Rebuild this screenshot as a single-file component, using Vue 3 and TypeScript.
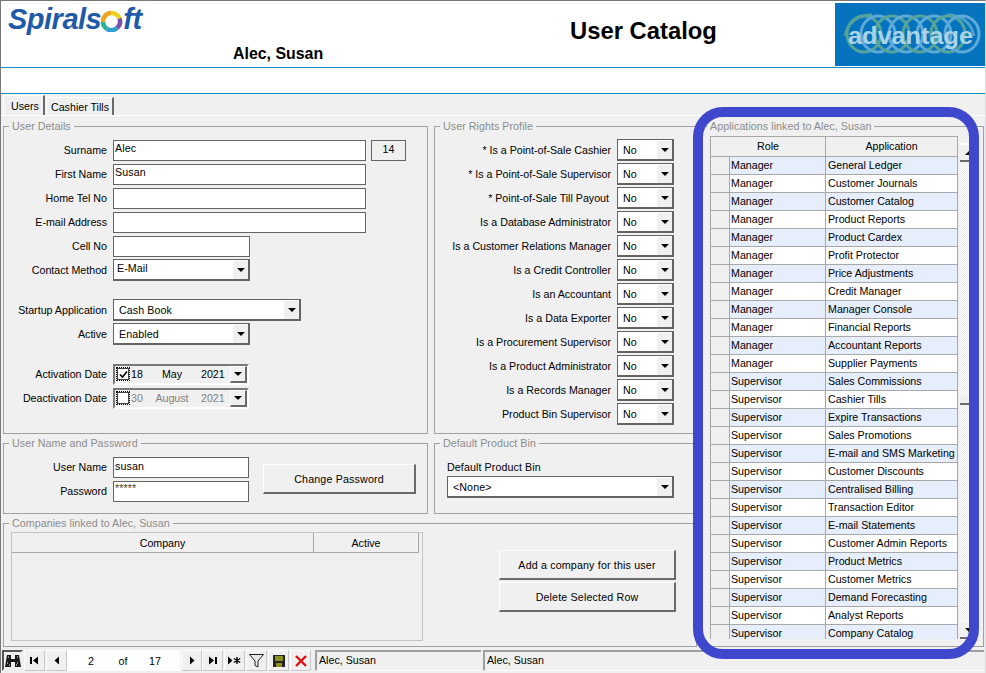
<script setup lang="ts">
interface LinkRow { role: string; app: string }
const manager: string[] = ['General Ledger','Customer Journals','Customer Catalog','Product Reports','Product Cardex','Profit Protector','Price Adjustments','Credit Manager','Manager Console','Financial Reports','Accountant Reports','Supplier Payments']
const supervisor: string[] = ['Sales Commissions','Cashier Tills','Expire Transactions','Sales Promotions','E-mail and SMS Marketing','Customer Discounts','Centralised Billing','Transaction Editor','E-mail Statements','Customer Admin Reports','Product Metrics','Customer Metrics','Demand Forecasting','Analyst Reports','Company Catalog']
const rows: LinkRow[] = [
  ...manager.map(app => ({ role: 'Manager', app })),
  ...supervisor.map(app => ({ role: 'Supervisor', app })),
]
const rights: string[] = ['* Is a Point-of-Sale Cashier','* Is a Point-of-Sale Supervisor','* Point-of-Sale Till Payout','Is a Database Administrator','Is a Customer Relations Manager','Is a Credit Controller','Is an Accountant','Is a Data Exporter','Is a Procurement Supervisor','Is a Product Administrator','Is a Records Manager','Product Bin Supervisor']
const loops: number[] = [864, 878, 892, 906, 920, 934, 948, 962]
</script>

<template>
  <div class="app">
    <header class="head">
      <div class="brand">
        <span class="brand-text">Spirals</span>
        <svg class="brand-ring" width="23" height="22" viewBox="0 0 23 22">
          <path d="M3 12 A8.5 8.5 0 0 1 11 3" fill="none" stroke="#f0a51e" stroke-width="4.5"/>
          <path d="M11 3 A8.5 8.5 0 0 1 19.5 8.5" fill="none" stroke="#e9d21f" stroke-width="4.5"/>
          <path d="M19.5 8.5 A8.5 8.5 0 0 1 17 18" fill="none" stroke="#7b4fa8" stroke-width="4.5"/>
          <path d="M17 18 A8.5 8.5 0 0 1 7 19" fill="none" stroke="#2f9fd0" stroke-width="4.5"/>
          <path d="M7 19 A8.5 8.5 0 0 1 3 12" fill="none" stroke="#2bb39a" stroke-width="4.5"/>
        </svg>
        <span class="brand-text">ft</span>
      </div>
      <div class="user-name">Alec, Susan</div>
      <h1 class="title">User Catalog</h1>
      <svg class="adv" width="150" height="63" viewBox="835 3 150 63">
        <rect x="835" y="3" width="150" height="63" fill="#0573bd"/>
        <g fill="none" stroke-width="3" opacity="0.85">
          <path d="M845 36 C848 22 858 15 872 15" stroke="#5fa98f"/>
          <path d="M974 36 C971 22 961 15 947 15" stroke="#5fa9cf"/>
          <ellipse v-for="(x, i) in loops" :key="x" :cx="x" cy="34" rx="17" ry="18" :stroke="i % 2 ? '#6db4dc' : '#63ad95'"/>
        </g>
        <text x="848" y="44" class="adv-text" textLength="125" lengthAdjust="spacingAndGlyphs">advantage</text>
      </svg>
    </header>
    <div class="band"></div>
    <nav class="tabs">
      <span class="tab tab-on">Users</span>
      <span class="tab">Cashier Tills</span>
    </nav>

    <main class="form">
      <div class="left">
        <div class="row-top">
          <section class="group details">
            <span class="legend">User Details</span>
            <div class="field"><label>Surname</label><span class="input w253">Alec</span><span class="input idbox">14</span></div>
            <div class="field"><label>First Name</label><span class="input w253">Susan</span></div>
            <div class="field"><label>Home Tel No</label><span class="input w253"></span></div>
            <div class="field"><label>E-mail Address</label><span class="input w253"></span></div>
            <div class="field"><label>Cell No</label><span class="input w137"></span></div>
            <div class="field"><label>Contact Method</label>
              <span class="combo w137 top"><span class="val">E-Mail</span><span class="drop"><i></i></span></span></div>
            <div class="field spaced"><label>Startup Application</label>
              <span class="combo w188"><span class="val pad">Cash Book</span><span class="drop"><i></i></span></span></div>
            <div class="field"><label>Active</label>
              <span class="combo w137"><span class="val pad">Enabled</span><span class="drop"><i></i></span></span></div>
            <div class="field spaced"><label>Activation Date</label>
              <span class="date"><span class="check"><svg width="9" height="9" viewBox="0 0 9 9"><path d="M1 4.5 L3.5 7 L8 1.5" fill="none" stroke="#000" stroke-width="1.6"/></svg></span><span class="d1">18</span><span class="d2">May</span><span class="d3">2021</span><span class="drop"><i></i></span></span></div>
            <div class="field"><label>Deactivation Date</label>
              <span class="date off"><span class="check"></span><span class="d1">30</span><span class="d2">August</span><span class="d3">2021</span><span class="drop"><i></i></span></span></div>
          </section>
          <section class="group rights">
            <span class="legend">User Rights Profile</span>
            <div v-for="(r, i) in rights" :key="r" class="field">
              <label class="rlabel" :class="{ nudge: i === 2 }">{{ r }}</label>
              <span class="combo w57"><span class="val pad">No</span><span class="drop"><i></i></span></span>
            </div>
          </section>
        </div>

        <div class="row-mid">
          <section class="group login">
            <span class="legend">User Name and Password</span>
            <div class="login-fields">
              <div class="field"><label>User Name</label><span class="input w136">susan</span></div>
              <div class="field"><label>Password</label><span class="input w136 pw">*****</span></div>
            </div>
            <button class="btn pwbtn">Change Password</button>
          </section>
          <section class="group bin">
            <span class="legend">Default Product Bin</span>
            <div class="bin-label">Default Product Bin</div>
            <span class="combo w227"><span class="val pad">&lt;None&gt;</span><span class="drop"><i></i></span></span>
          </section>
        </div>

        <section class="group companies">
          <span class="legend">Companies linked to Alec, Susan</span>
          <div class="ctable">
            <div class="chead"><span class="c1">Company</span><span class="c2">Active</span></div>
          </div>
          <div class="cbtns">
            <button class="btn">Add a company for this user</button>
            <button class="btn">Delete Selected Row</button>
          </div>
        </section>
      </div>

      <section class="group apps">
        <span class="legend">Applications linked to Alec, Susan</span>
        <div class="apps-wrap">
          <div class="atable">
            <div class="ahead"><span class="role">Role</span><span class="appc">Application</span></div>
            <div v-for="(r, i) in rows" :key="r.app" class="arow" :class="{ tint: i % 2 === 0 }">
              <span class="sel"></span><span class="role">{{ r.role }}</span><span class="appc">{{ r.app }}</span>
            </div>
          </div>
          <div class="scroll">
            <span class="sb-blank"></span>
            <span class="sb-btn"><i class="up"></i></span>
            <span class="sb-track"><span class="sb-thumb"></span></span>
            <span class="sb-btn"><i></i></span>
          </div>
        </div>
      </section>
    </main>

    <footer class="nav">
      <button class="nb find">
        <svg width="16" height="14" viewBox="0 0 16 14"><path d="M2 1h4v4h4V1h4l2 12h-6V8H6v5H0z" fill="#1a1a1a"/><path d="M3 3h1M12 3h1M2 9h2M12 9h2M4 11h1M11 11h1" stroke="#fff" stroke-width="1" stroke-dasharray="1 1"/></svg>
      </button>
      <button class="nb"><svg width="9" height="9" viewBox="0 0 9 9"><path d="M0 1h2v7H0zM8 0.5v8L3 4.5z" fill="#000"/></svg></button>
      <button class="nb"><svg width="6" height="9" viewBox="0 0 6 9"><path d="M5 0.5v8L0.5 4.5z" fill="#000"/></svg></button>
      <div class="rec"><span>2</span><span>of</span><span>17</span></div>
      <button class="nb"><svg width="6" height="9" viewBox="0 0 6 9"><path d="M1 0.5v8L5.5 4.5z" fill="#000"/></svg></button>
      <button class="nb tight"><svg width="9" height="9" viewBox="0 0 9 9"><path d="M1 0.5v8L6 4.5zM7 1h2v7H7z" fill="#000"/></svg></button>
      <button class="nb"><svg width="13" height="9" viewBox="0 0 13 9"><path d="M0 0.5v8L4.5 4.5z" fill="#000"/><path d="M9 1v7M5.8 2.5l6.4 4M12.2 2.5l-6.4 4" stroke="#000" stroke-width="1.4"/></svg></button>
      <button class="nb"><svg width="15" height="14" viewBox="0 0 15 14"><path d="M0.5 0.5h14L9 7v6L6 11.5V7z" fill="#e8e8e8" stroke="#222"/></svg></button>
      <button class="nb"><svg width="12" height="12" viewBox="0 0 12 12"><rect width="12" height="12" fill="#222"/><rect x="2" y="1" width="8" height="5" fill="#8f8f1f"/><rect x="3" y="8" width="6" height="4" fill="#8f8f1f"/></svg></button>
      <button class="nb"><svg width="12" height="12" viewBox="0 0 12 12"><path d="M1 1l10 10M11 1L1 11" stroke="#e01010" stroke-width="2.4"/></svg></button>
      <div class="status s1">Alec, Susan</div>
      <div class="status s2">Alec, Susan</div>
    </footer>

    <div class="ring"></div>
  </div>
</template>

<style>
html, body { margin: 0; padding: 0; background: #f0f0f0; }
</style>

<style scoped>
.app {
  position: relative; width: 986px; height: 673px; box-sizing: border-box; overflow: hidden;
  background: #f0f0f0; border-top: 1px solid #777; border-left: 1px solid #777; border-right: 1px solid #ddd;
  font: 10.67px "Liberation Sans", Arial, sans-serif; color: #000;
}
.head { height: 66px; background: #fff; border-bottom: 1px solid #1e8ccb; display: flex; box-sizing: content-box; }
.brand { width: 225px; margin-left: 7px; margin-top: 1px; height: 34px; display: flex; align-items: center; flex: none; }
.brand-text { font: italic bold 29px "Liberation Sans", sans-serif; color: #1f5aa8; letter-spacing: -0.5px; line-height: 34px; }
.brand-ring { margin: 3px 0 0 -1px; flex: none; }
.user-name { align-self: flex-end; font: bold 15.9px "Liberation Sans", sans-serif; margin-bottom: 4px; flex: none; }
.title { margin: 15px 0 0 247px; font: bold 23.8px/30px "Liberation Sans", sans-serif; flex: none; }
.adv { margin: 2px 0 0 auto; flex: none; }
.adv-text { font: bold 24px "Liberation Sans", sans-serif; fill: #abd3e6; }
.band { height: 25px; background: #fff; border-bottom: 1px solid #1e8ccb; }
.tabs { height: 21px; display: flex; align-items: flex-end; padding-left: 2px; border-bottom: 1px solid #fff; }
.tab { height: 18px; line-height: 18px; padding: 0 3px 0 4px; margin-left: 1px; background: #f0f0f0; border-top: 1px solid #fff; border-left: 1px solid #fff; border-right: 2px solid #6a6a6a; box-sizing: border-box; }
.tab-on { height: 20px; line-height: 20px; width: 42px; padding: 0 0 0 7px; margin-left: 0; }

.form { display: flex; padding: 10px 0 0 2px; gap: 4px; }
.left { width: 694px; flex: none; display: flex; flex-direction: column; gap: 9px; }
.row-top, .row-mid { display: flex; gap: 6px; }
.group { position: relative; box-sizing: border-box; border: 1px solid #a0a0a0; }
.legend { position: absolute; top: -7px; left: 5px; padding: 0 3px; background: #f0f0f0; color: #8c8c8c; line-height: 13px; white-space: nowrap; letter-spacing: 0.06px; }
.details { width: 425px; height: 308px; padding-top: 12px; display: flex; flex-direction: column; gap: 2px; flex: none; }
.rights { flex: 1; height: 308px; padding-top: 12px; display: flex; flex-direction: column; gap: 2px; }
.field { height: 22px; display: flex; align-items: center; flex: none; }
.field.spaced { margin-top: 16px; }
.field label { width: 103px; flex: none; margin-right: 6px; text-align: right; white-space: nowrap; }
.field .rlabel { width: 176px; }
.rlabel.nudge { width: 174px; margin-right: 8px; }
.input { height: 21px; box-sizing: border-box; display: block; border: 1px solid #646464; background: #fff; padding: 1px; line-height: 14px; letter-spacing: 0.1px; }
.details .input { padding-top: 0; }
.w253 { width: 253px; } .w137 { width: 137px; } .w136 { width: 136px; } .w188 { width: 188px; } .w57 { width: 57px; } .w227 { width: 227px; }
.details .idbox { width: 35px; margin-left: 5px; text-align: center; padding-top: 1px; background: #f0f0f0; }
.pw { color: #4a3c08; line-height: 11px; }
.combo { height: 22px; box-sizing: border-box; display: flex; border: 1px solid #646464; border-right-width: 2px; border-bottom-width: 2px; background: #fff; }
.val { flex: 1; line-height: 20px; padding-left: 3px; overflow: hidden; white-space: nowrap; letter-spacing: 0.1px; }
.val.pad { padding-left: 5px; }
.top .val { line-height: 16px; }
.drop { width: 16px; flex: none; background: #f0f0f0; border-left: 1px solid #fff; border-top: 1px solid #fff; display: flex; align-items: center; justify-content: center; box-sizing: border-box; }
.drop i, .sb-btn i { width: 0; height: 0; border-left: 4px solid transparent; border-right: 4px solid transparent; border-top: 4px solid #000; display: block; }
.sb-btn i.up { border-top: 0; border-bottom: 4px solid #000; }
.date { width: 136px; height: 21px; box-sizing: border-box; display: flex; align-items: center; border: 2px solid #7a7a7a; border-right-color: #fff; border-bottom-color: #fff; background: #f0f0f0; }
.check { width: 12px; height: 12px; box-sizing: border-box; flex: none; background: #fff; border: 1px solid #444; outline: 1px dotted #000; margin: 0 1px 0 2px; display: flex; align-items: center; justify-content: center; }
.d1 { width: 16px; flex: none; margin-left: 1px; }
.d2 { width: 50px; flex: none; text-align: center; }
.d3 { flex: none; margin-left: 4px; }
.date .drop { width: 17px; height: 17px; border-right: 2px solid #6a6a6a; border-bottom: 2px solid #6a6a6a; margin-left: auto; }
.off .d1, .off .d2, .off .d3 { color: #7f7f7f; }

.login { width: 425px; height: 71px; flex: none; display: flex; padding-top: 12px; }
.login-fields { display: flex; flex-direction: column; gap: 2px; }
.btn { font: inherit; letter-spacing: 0.17px; color: #000; background: #f0f0f0; box-sizing: border-box; height: 30px; padding: 0; border: 1px solid #fff; border-right: 2px solid #6a6a6a; border-bottom: 2px solid #6a6a6a; }
.pwbtn { width: 153px; margin: 8px 0 0 14px; }
.bin { flex: 1; height: 71px; padding: 16px 0 0 12px; }
.bin-label { line-height: 14px; margin-bottom: 2px; letter-spacing: 0.1px; }
.companies { height: 124px; display: flex; padding: 8px 0 0 7px; }
.ctable { width: 412px; height: 109px; box-sizing: border-box; border: 1px solid #c4c4c4; flex: none; }
.chead { height: 20px; box-sizing: border-box; width: 407px; display: flex; border-bottom: 1px solid #a8a8a8; text-align: center; line-height: 21px; }
.c1 { width: 301px; border-right: 1px solid #a8a8a8; }
.c2 { flex: 1; border-right: 1px solid #a8a8a8; }
.cbtns { display: flex; flex-direction: column; gap: 2px; margin: 18px 0 0 76px; width: 177px; }

.apps { width: 283px; height: 521px; flex: none; padding: 9px 0 0 8px; }
.apps-wrap { display: flex; height: 503px; overflow: hidden; }
.atable { width: 248px; flex: none; border-top: 1px solid #a8a8a8; border-left: 1px solid #a8a8a8; box-sizing: border-box; }
.ahead, .arow { display: flex; height: 18px; box-sizing: border-box; border-bottom: 1px solid #a8a8a8; line-height: 17px; background: #fff; }
.ahead { height: 20px; line-height: 19px; background: #f0f0f0; text-align: center; }
.arow.tint { background: #e6edfb; }
.sel { width: 19px; flex: none; background: #f0f0f0; border-right: 1px solid #a8a8a8; box-sizing: border-box; }
.role { width: 96px; flex: none; border-right: 1px solid #a8a8a8; box-sizing: border-box; padding-left: 1px; }
.ahead .role { width: 115px; padding-left: 0; }
.appc { flex: 1; min-width: 0; border-right: 1px solid #a8a8a8; padding-left: 2px; white-space: nowrap; overflow: hidden; }
.ahead .appc { padding-left: 0; }
.scroll { width: 17px; margin-left: 2px; display: flex; flex-direction: column; flex: none; }
.sb-blank { height: 7px; flex: none; background: #f0f0f0; border-bottom: 1px solid #fff; }
.sb-btn { height: 18px; flex: none; background: #f0f0f0; border-top: 1px solid #fff; border-bottom: 2px solid #6a6a6a; box-sizing: border-box; display: flex; align-items: center; justify-content: center; }
.sb-track { flex: 1; position: relative; background: repeating-conic-gradient(#fff 0 25%, #ececec 0 50%) 0 0 / 2px 2px; }
.sb-thumb { position: absolute; left: 0; right: 0; top: 234px; height: 9px; background: #f0f0f0; border-bottom: 2px solid #6a6a6a; box-sizing: border-box; }

.nav { position: absolute; left: 1px; bottom: 2px; right: 0; height: 21px; display: flex; gap: 1px; }
.nb { width: 21px; height: 21px; padding: 0; margin: 0; background: #f0f0f0; border: 1px solid #fff; border-right-color: #c8c8c8; border-bottom-color: #c8c8c8; box-sizing: border-box; display: flex; align-items: center; justify-content: center; flex: none; }
.nb.tight { margin-left: -1px; }
.find { border: 2px solid #555; border-right-color: #eee; border-bottom-color: #eee; }
.rec { width: 113px; height: 21px; margin-left: -1px; background: #fff; display: grid; grid-template-columns: repeat(3, 32px); flex: none; align-items: center; justify-items: center; padding-left: 8px; box-sizing: border-box; }
.status { height: 21px; box-sizing: border-box; border-top: 2px solid #a0a0a0; border-left: 2px solid #a0a0a0; border-bottom: 1px solid #fff; line-height: 17px; padding-left: 2px; flex: none; }
.s1 { width: 166px; margin-left: 3px; }
.s2 { width: 501px; margin-left: 1px; }
.ring { position: absolute; left: 692px; top: 106px; width: 286px; height: 552px; box-sizing: border-box; border: 10px solid #3f48cc; border-radius: 30px; pointer-events: none; }
</style>
